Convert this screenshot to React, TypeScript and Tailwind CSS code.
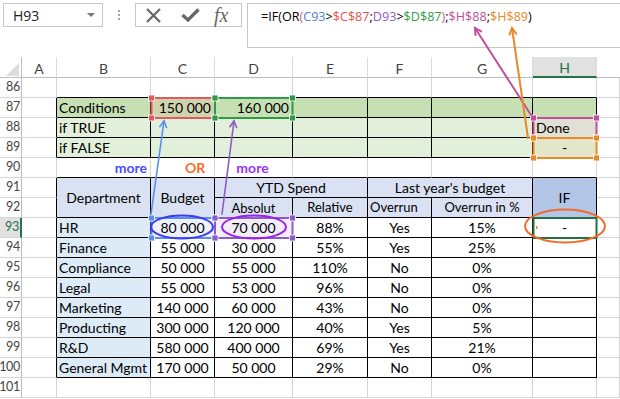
import clsx from "clsx";
import type { ReactNode } from "react";

type Align = "l" | "r" | "c";

function Cell({
  children,
  className,
  r = false,
  b = false,
  align = "c",
}: {
  children?: ReactNode;
  className?: string;
  r?: boolean;
  b?: boolean;
  align?: Align;
}) {
  return (
    <div
      className={clsx(
        "flex items-center overflow-visible whitespace-nowrap border-r border-b",
        r ? "border-r-black" : "border-r-[#d4d4d4]",
        b ? "border-b-black" : "border-b-[#d4d4d4]",
        align === "l" && "justify-start pl-[2px]",
        align === "r" && "justify-end pr-[3px]",
        align === "c" && "justify-center",
        className
      )}
    >
      {children}
    </div>
  );
}

function RowHead({ n, active }: { n: number; active?: boolean }) {
  return (
    <div
      className={clsx(
        "flex items-center justify-end border-b border-b-[#d4d4d4] pr-[1px] text-[12.5px] tracking-[-0.3px]",
        active
          ? "border-r-2 border-r-[#217346] bg-[#e1e1e1] text-[#217346]"
          : "border-r border-r-[#bdbdbd] text-[#444]"
      )}
    >
      {n}
    </div>
  );
}

function ColHead({ l, active }: { l: string; active?: boolean }) {
  return (
    <div
      className={clsx(
        "flex items-center justify-center border-r border-r-[#dadada] pt-[2px] text-[14px]",
        active
          ? "border-b-2 border-b-[#217346] bg-[#e1e1e1] text-[#217346]"
          : "border-b border-b-[#bdbdbd] text-[#444]"
      )}
    >
      {l}
    </div>
  );
}

const data = [
  { n: 93, dept: "HR", budget: "80 000", abs: "70 000", rel: "88%", over: "Yes", pct: "15%", iff: "-" },
  { n: 94, dept: "Finance", budget: "55 000", abs: "30 000", rel: "55%", over: "Yes", pct: "25%", iff: "" },
  { n: 95, dept: "Compliance", budget: "50 000", abs: "55 000", rel: "110%", over: "No", pct: "0%", iff: "" },
  { n: 96, dept: "Legal", budget: "55 000", abs: "53 000", rel: "96%", over: "No", pct: "0%", iff: "" },
  { n: 97, dept: "Marketing", budget: "140 000", abs: "60 000", rel: "43%", over: "No", pct: "0%", iff: "" },
  { n: 98, dept: "Producting", budget: "300 000", abs: "120 000", rel: "40%", over: "Yes", pct: "5%", iff: "" },
  { n: 99, dept: "R&D", budget: "580 000", abs: "400 000", rel: "69%", over: "Yes", pct: "21%", iff: "" },
  { n: 100, dept: "General Mgmt", budget: "170 000", abs: "50 000", rel: "29%", over: "No", pct: "0%", iff: "" },
];

function Handles({ x1, y1, x2, y2, c }: { x1: number; y1: number; x2: number; y2: number; c: string }) {
  const pts = [
    [x1, y1],
    [x2, y1],
    [x1, y2],
    [x2, y2],
  ];
  return (
    <g>
      <rect x={x1} y={y1} width={x2 - x1} height={y2 - y1} fill="none" stroke={c} strokeWidth={2} />
      {pts.map(([x, y], i) => (
        <rect key={i} x={x - 3} y={y - 3} width={6} height={6} fill={c} stroke="#fff" strokeWidth={0.8} />
      ))}
    </g>
  );
}

function Arrow({ x1, y1, x2, y2, c, w = 2 }: { x1: number; y1: number; x2: number; y2: number; c: string; w?: number }) {
  const a = Math.atan2(y2 - y1, x2 - x1);
  const L = 7;
  const p = (d: number) => `${x2 - L * Math.cos(a + d)},${y2 - L * Math.sin(a + d)}`;
  return (
    <g stroke={c} strokeWidth={w} fill="none" strokeLinecap="round">
      <line x1={x1} y1={y1} x2={x2} y2={y2} />
      <polyline points={`${p(0.5)} ${x2},${y2} ${p(-0.5)}`} />
    </g>
  );
}

function Overlay() {
  return (
    <svg className="pointer-events-none absolute left-0 top-0" width={620} height={399}>
      <Handles x1={151.5} y1={98} x2={215} y2={118} c="#e05b5b" />
      <Handles x1={215} y1={98} x2={292.5} y2={118} c="#2f9a45" />
      <Handles x1={533.5} y1={118} x2={596.5} y2={138} c="#c0509a" />
      <Handles x1={533.5} y1={138} x2={596.5} y2={158} c="#e8892b" />
      <Handles x1={151.5} y1={218} x2={215} y2={238} c="#5b8def" />
      <Handles x1={215} y1={218} x2={292.5} y2={238} c="#8b5cc8" />
      <rect x={533.5} y={218} width={63} height={20} fill="none" stroke="#217346" strokeWidth={2} />
      <rect x={536} y={226} width={1.5} height={3} fill="#e8892b" />
      <ellipse cx={182} cy={227} rx={31} ry={11.5} fill="none" stroke="#3c3cf2" strokeWidth={2} />
      <ellipse cx={254} cy={227} rx={32} ry={11.5} fill="none" stroke="#9a20ee" strokeWidth={2} />
      <ellipse cx={565} cy={226} rx={40} ry={16.5} fill="none" stroke="#f26a2b" strokeWidth={2} />
      <Arrow x1={151} y1={214} x2={164} y2={121} c="#5b8def" w={1.6} />
      <Arrow x1={222} y1={214} x2={234} y2={121} c="#8b5cc8" w={1.6} />
      <Arrow x1={531} y1={115} x2={475} y2={28} c="#c0509a" />
      <Arrow x1={528} y1={138} x2={512} y2={28} c="#e8892b" />
    </svg>
  );
}

function FormulaBar() {
  return (
    <div className="flex h-[57px] items-start pt-[3px] font-['Open_Sans',sans-serif]">
      <div className="ml-[3px] flex h-[24px] w-[100px] items-center justify-between border border-[#c6c6c6] pl-[9px] pr-[7px] text-[14px] text-[#222]">
        <span>H93</span>
        <span className="h-0 w-0 border-x-[4px] border-t-[4px] border-x-transparent border-t-[#777]" />
      </div>
      <div className="ml-[15px] mt-[7px] flex flex-col gap-[2px]">
        <span className="h-[2px] w-[2px] bg-[#a6a6a6]" />
        <span className="h-[2px] w-[2px] bg-[#a6a6a6]" />
        <span className="h-[2px] w-[2px] bg-[#a6a6a6]" />
      </div>
      <div className="ml-[15px] flex h-[24px] w-[107px] items-center border border-[#c6c6c6]">
        <svg className="ml-[9px]" width={17} height={15} viewBox="0 0 17 15">
          <path d="M2 1 L15 14 M15 1 L2 14" stroke="#666" strokeWidth={2.2} fill="none" />
        </svg>
        <svg className="ml-[19px]" width={19} height={14} viewBox="0 0 19 14">
          <path d="M1.5 7 L7 12 L17.5 1.5" stroke="#666" strokeWidth={3.2} fill="none" />
        </svg>
        <span className="ml-[14px] font-['Liberation_Serif',serif] text-[20px] italic leading-none text-[#666]">fx</span>
      </div>
      <div className="ml-[5px] h-[45px] flex-1 border-y border-l border-[#c6c6c6] pl-[13px] pt-[4px] text-[12.6px] text-black">
        =IF(OR<span className="text-[#e0607a]">(</span>
        <span className="text-[#4f7fe0]">C93</span>&gt;<span className="text-[#e8504f]">$C$87</span>;
        <span className="text-[#8b5cc8]">D93</span>&gt;<span className="text-[#2f9a45]">$D$87</span>
        <span className="text-[#e0607a]">)</span>;<span className="text-[#c0509a]">$H$88</span>;
        <span className="text-[#e8892b]">$H$89</span>)
      </div>
    </div>
  );
}

export default function App() {
  return (
    <div className="relative h-[399px] w-[620px] overflow-hidden bg-white">
      <FormulaBar />
      <div className="grid grid-cols-[22px_35px_94px_64px_78px_75px_64px_101px_64px_23px] grid-rows-[21px_repeat(16,20px)] font-['Lato',sans-serif] text-[14px] text-black">
        {/* column headers */}
        <div className="border-r border-b border-r-[#bdbdbd] border-b-[#bdbdbd]">
          <svg width={21} height={20}>
            <polygon points="19,6 19,19 6,19" fill="#dcdcdc" />
          </svg>
        </div>
        {["A", "B", "C", "D", "E", "F", "G"].map((l) => (
          <ColHead key={l} l={l} />
        ))}
        <ColHead l="H" active />
        <div className="border-b border-b-[#bdbdbd]" />

        {/* 86 */}
        <RowHead n={86} />
        <Cell />
        {[0, 1, 2, 3, 4, 5, 6].map((i) => (
          <Cell key={i} b />
        ))}
        <Cell />

        {/* 87 */}
        <RowHead n={87} />
        <Cell r />
        <Cell r b align="l" className="bg-[#c6e0b4]">Conditions</Cell>
        <Cell r b align="r" className="bg-[#cfd4ae]">150 000</Cell>
        <Cell r b align="r" className="bg-[#c6e0b4]">160 000</Cell>
        <Cell r b className="bg-[#c6e0b4]" />
        <Cell r b className="bg-[#c6e0b4]" />
        <Cell r b className="bg-[#c6e0b4]" />
        <Cell r b className="bg-[#c6e0b4]" />
        <Cell />

        {/* 88 */}
        <RowHead n={88} />
        <Cell r />
        <Cell r b align="l" className="bg-[#e2efda]">if TRUE</Cell>
        <Cell r b className="bg-[#e2efda]" />
        <Cell r b className="bg-[#e2efda]" />
        <Cell r b className="bg-[#e2efda]" />
        <Cell r b className="bg-[#e2efda]" />
        <Cell r b className="bg-[#e2efda]" />
        <Cell r b align="l" className="bg-[#e0e1d4] pl-[3px]">Done</Cell>
        <Cell />

        {/* 89 */}
        <RowHead n={89} />
        <Cell r />
        <Cell r b align="l" className="bg-[#e2efda]">if FALSE</Cell>
        <Cell r b className="bg-[#e2efda]" />
        <Cell r b className="bg-[#e2efda]" />
        <Cell r b className="bg-[#e2efda]" />
        <Cell r b className="bg-[#e2efda]" />
        <Cell r b className="bg-[#e2efda]" />
        <Cell r b className="bg-[#e4e6ca]">-</Cell>
        <Cell />

        {/* 90 */}
        <RowHead n={90} />
        <Cell />
        <Cell b align="r" className="pr-[1px] font-bold text-[#4b4bff]">more</Cell>
        <Cell b align="l" className="pl-[34px] font-bold text-[#ff6a2a]">OR</Cell>
        <Cell b className="pr-[2px] font-bold text-[#9933ff]">more</Cell>
        <Cell b />
        <Cell b />
        <Cell b />
        <Cell b />
        <Cell />

        {/* 91 */}
        <RowHead n={91} />
        <Cell r />
        <Cell r b className="row-span-2 bg-[#d9e1f2]">Department</Cell>
        <Cell r b className="row-span-2 bg-[#d9e1f2]">Budget</Cell>
        <Cell r b className="col-span-2 bg-[#d9e1f2]">YTD Spend</Cell>
        <Cell r b className="col-span-2 bg-[#d9e1f2]">Last year's budget</Cell>
        <Cell r b className="row-span-2 bg-[#b4c6e7]">IF</Cell>
        <Cell />

        {/* 92 */}
        <RowHead n={92} />
        <Cell r />
        <Cell r b className="bg-[#d9e1f2] pt-[2px] text-[13px]">Absolut</Cell>
        <Cell r b className="bg-[#d9e1f2] text-[13px]">Relative</Cell>
        <Cell r b align="l" className="bg-[#d9e1f2] text-[13px]">Overrun</Cell>
        <Cell r b className="bg-[#d9e1f2] text-[13px]">Overrun in %</Cell>
        <Cell />

        {data.map((d) => {
          const first = d.n === 93;
          return [
            <RowHead key={`h${d.n}`} n={d.n} active={first} />,
            <Cell key={`a${d.n}`} r />,
            <Cell key={`b${d.n}`} r b align="l" className="bg-[#ddebf7]">{d.dept}</Cell>,
            <Cell key={`c${d.n}`} r b className={first ? "bg-[#eef0fb]" : ""}>{d.budget}</Cell>,
            <Cell key={`d${d.n}`} r b className={first ? "bg-[#f4eefb]" : ""}>{d.abs}</Cell>,
            <Cell key={`e${d.n}`} r b>{d.rel}</Cell>,
            <Cell key={`f${d.n}`} r b>{d.over}</Cell>,
            <Cell key={`g${d.n}`} r b>{d.pct}</Cell>,
            <Cell key={`i${d.n}`} r b>{d.iff}</Cell>,
            <Cell key={`j${d.n}`} />,
          ];
        })}

        {/* 101 */}
        <RowHead n={101} />
        {[0, 1, 2, 3, 4, 5, 6, 7, 8].map((i) => (
          <Cell key={i} />
        ))}
      </div>
      <Overlay />
    </div>
  );
}
